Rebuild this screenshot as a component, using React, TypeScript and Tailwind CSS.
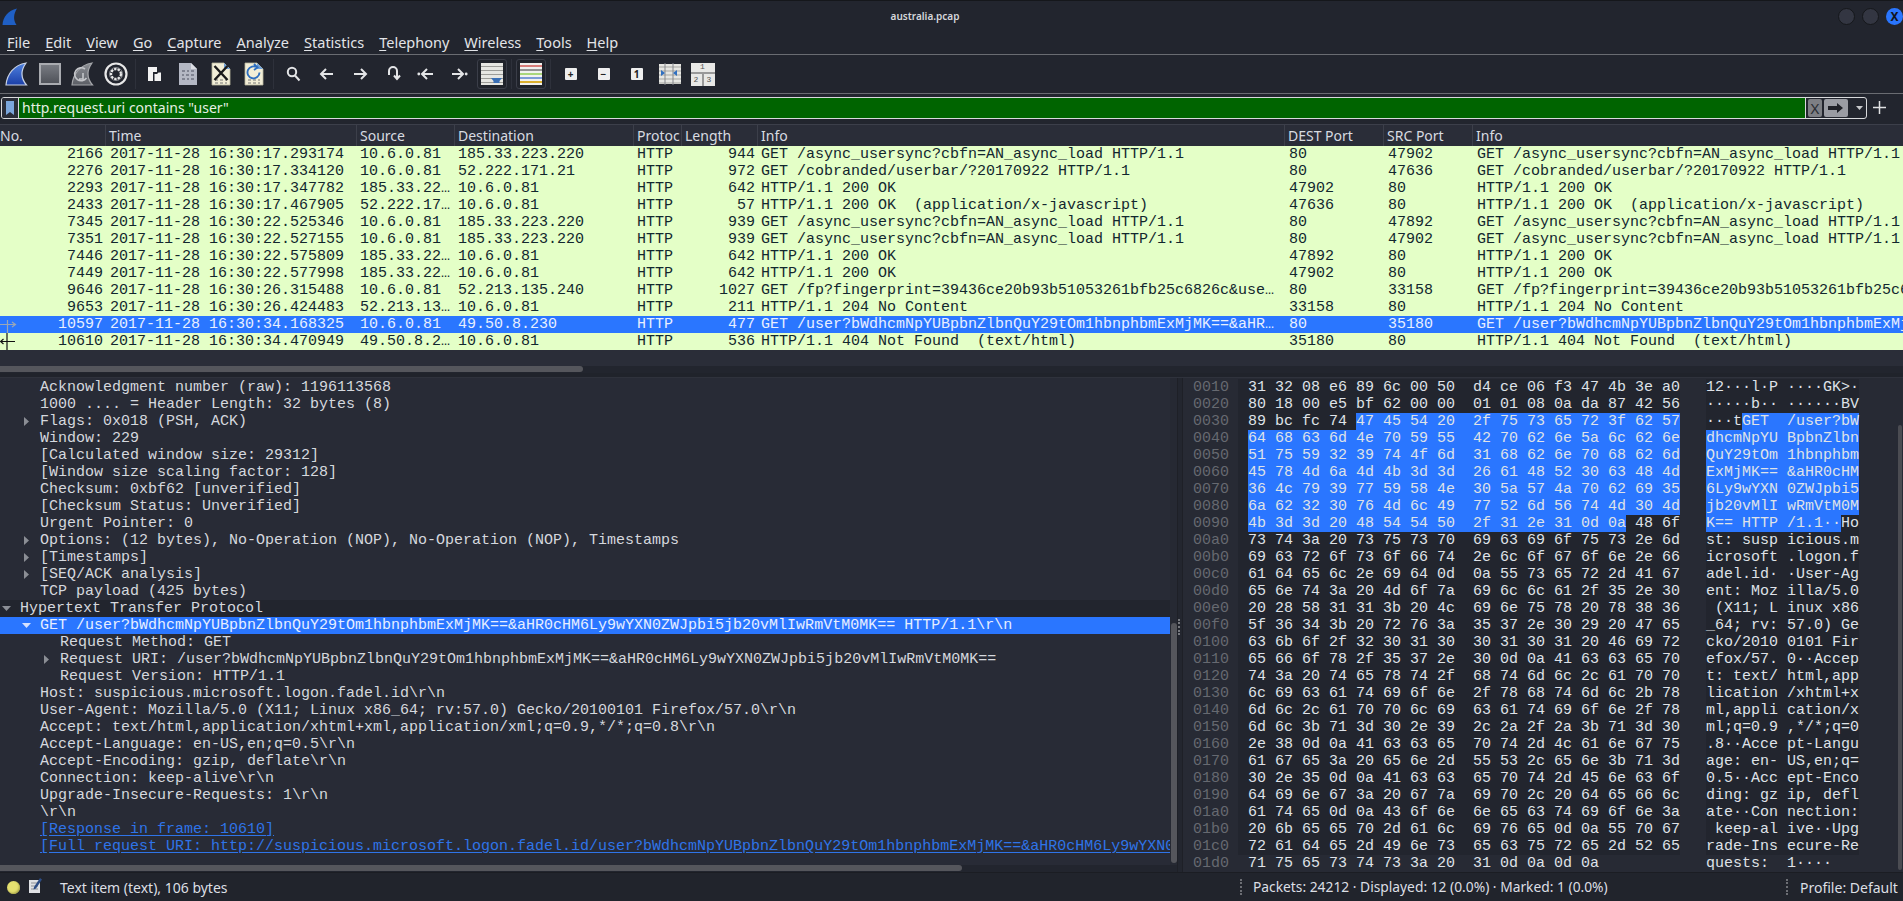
import type { ReactNode } from "react";

const MONO = "font-['Liberation_Mono',monospace]";
const SANS = "font-['Noto_Sans',sans-serif]";

const MENU = ["File", "Edit", "View", "Go", "Capture", "Analyze", "Statistics", "Telephony", "Wireless", "Tools", "Help"];

const COLUMNS = [
  { label: "No.", w: "w-[105px]", pl: "pl-0" },
  { label: "Time", w: "w-[251px]", pl: "pl-[3px]" },
  { label: "Source", w: "w-[98px]", pl: "pl-[3px]" },
  { label: "Destination", w: "w-[179px]", pl: "pl-[3px]" },
  { label: "Protoc", w: "w-[48px]", pl: "pl-[3px]" },
  { label: "Length", w: "w-[76px]", pl: "pl-[3px]" },
  { label: "Info", w: "w-[527px]", pl: "pl-[3px]" },
  { label: "DEST Port", w: "w-[99px]", pl: "pl-[3px]" },
  { label: "SRC Port", w: "w-[89px]", pl: "pl-[3px]" },
  { label: "Info", w: "flex-1", pl: "pl-[3px]" },
];

const ASYNC = "GET /async_usersync?cbfn=AN_async_load HTTP/1.1";
const USER = "GET /user?bWdhcmNpYUBpbnZlbnQuY29tOm1hbnphbmExMjMK==&aHR0cHM6Ly9wYXN0ZWJpbi5jb20vMlIwRmVtM0MK== HTTP/1.1";
const FP = "GET /fp?fingerprint=39436ce20b93b51053261bfb25c6826c&user_agent=Mozilla HTTP/1.1";

const PACKETS = [
  ["2166", "2017-11-28 16:30:17.293174", "10.6.0.81", "185.33.223.220", "944", ASYNC, "80", "47902", ASYNC],
  ["2276", "2017-11-28 16:30:17.334120", "10.6.0.81", "52.222.171.21", "972", "GET /cobranded/userbar/?20170922 HTTP/1.1", "80", "47636", "GET /cobranded/userbar/?20170922 HTTP/1.1"],
  ["2293", "2017-11-28 16:30:17.347782", "185.33.22…", "10.6.0.81", "642", "HTTP/1.1 200 OK", "47902", "80", "HTTP/1.1 200 OK"],
  ["2433", "2017-11-28 16:30:17.467905", "52.222.17…", "10.6.0.81", "57", "HTTP/1.1 200 OK  (application/x-javascript)", "47636", "80", "HTTP/1.1 200 OK  (application/x-javascript)"],
  ["7345", "2017-11-28 16:30:22.525346", "10.6.0.81", "185.33.223.220", "939", ASYNC, "80", "47892", ASYNC],
  ["7351", "2017-11-28 16:30:22.527155", "10.6.0.81", "185.33.223.220", "939", ASYNC, "80", "47902", ASYNC],
  ["7446", "2017-11-28 16:30:22.575809", "185.33.22…", "10.6.0.81", "642", "HTTP/1.1 200 OK", "47892", "80", "HTTP/1.1 200 OK"],
  ["7449", "2017-11-28 16:30:22.577998", "185.33.22…", "10.6.0.81", "642", "HTTP/1.1 200 OK", "47902", "80", "HTTP/1.1 200 OK"],
  ["9646", "2017-11-28 16:30:26.315488", "10.6.0.81", "52.213.135.240", "1027", "GET /fp?fingerprint=39436ce20b93b51053261bfb25c6826c&use…", "80", "33158", FP],
  ["9653", "2017-11-28 16:30:26.424483", "52.213.13…", "10.6.0.81", "211", "HTTP/1.1 204 No Content", "33158", "80", "HTTP/1.1 204 No Content"],
  ["10597", "2017-11-28 16:30:34.168325", "10.6.0.81", "49.50.8.230", "477", "GET /user?bWdhcmNpYUBpbnZlbnQuY29tOm1hbnphbmExMjMK==&aHR…", "80", "35180", USER],
  ["10610", "2017-11-28 16:30:34.470949", "49.50.8.2…", "10.6.0.81", "536", "HTTP/1.1 404 Not Found  (text/html)", "35180", "80", "HTTP/1.1 404 Not Found  (text/html)"],
];

type Detail = { text: string; pl: string; arrow?: "right" | "down"; kind?: "head" | "selected" | "link" };

const DETAILS: Detail[] = [
  { text: "Acknowledgment number (raw): 1196113568", pl: "pl-[20px]" },
  { text: "1000 .... = Header Length: 32 bytes (8)", pl: "pl-[20px]" },
  { text: "Flags: 0x018 (PSH, ACK)", pl: "pl-[20px]", arrow: "right" },
  { text: "Window: 229", pl: "pl-[20px]" },
  { text: "[Calculated window size: 29312]", pl: "pl-[20px]" },
  { text: "[Window size scaling factor: 128]", pl: "pl-[20px]" },
  { text: "Checksum: 0xbf62 [unverified]", pl: "pl-[20px]" },
  { text: "[Checksum Status: Unverified]", pl: "pl-[20px]" },
  { text: "Urgent Pointer: 0", pl: "pl-[20px]" },
  { text: "Options: (12 bytes), No-Operation (NOP), No-Operation (NOP), Timestamps", pl: "pl-[20px]", arrow: "right" },
  { text: "[Timestamps]", pl: "pl-[20px]", arrow: "right" },
  { text: "[SEQ/ACK analysis]", pl: "pl-[20px]", arrow: "right" },
  { text: "TCP payload (425 bytes)", pl: "pl-[20px]" },
  { text: "Hypertext Transfer Protocol", pl: "pl-0", arrow: "down", kind: "head" },
  { text: "GET /user?bWdhcmNpYUBpbnZlbnQuY29tOm1hbnphbmExMjMK==&aHR0cHM6Ly9wYXN0ZWJpbi5jb20vMlIwRmVtM0MK== HTTP/1.1\\r\\n", pl: "pl-[20px]", arrow: "down", kind: "selected" },
  { text: "Request Method: GET", pl: "pl-[40px]" },
  { text: "Request URI: /user?bWdhcmNpYUBpbnZlbnQuY29tOm1hbnphbmExMjMK==&aHR0cHM6Ly9wYXN0ZWJpbi5jb20vMlIwRmVtM0MK==", pl: "pl-[40px]", arrow: "right" },
  { text: "Request Version: HTTP/1.1", pl: "pl-[40px]" },
  { text: "Host: suspicious.microsoft.logon.fadel.id\\r\\n", pl: "pl-[20px]" },
  { text: "User-Agent: Mozilla/5.0 (X11; Linux x86_64; rv:57.0) Gecko/20100101 Firefox/57.0\\r\\n", pl: "pl-[20px]" },
  { text: "Accept: text/html,application/xhtml+xml,application/xml;q=0.9,*/*;q=0.8\\r\\n", pl: "pl-[20px]" },
  { text: "Accept-Language: en-US,en;q=0.5\\r\\n", pl: "pl-[20px]" },
  { text: "Accept-Encoding: gzip, deflate\\r\\n", pl: "pl-[20px]" },
  { text: "Connection: keep-alive\\r\\n", pl: "pl-[20px]" },
  { text: "Upgrade-Insecure-Requests: 1\\r\\n", pl: "pl-[20px]" },
  { text: "\\r\\n", pl: "pl-[20px]" },
  { text: "[Response in frame: 10610]", pl: "pl-[20px]", kind: "link" },
  { text: "[Full request URI: http://suspicious.microsoft.logon.fadel.id/user?bWdhcmNpYUBpbnZlbnQuY29tOm1hbnphbmExMjMK==&aHR0cHM6Ly9wYXN0ZWJpbi5jb20vMlIwRmVtM0MK==]", pl: "pl-[20px]", kind: "link" },
];

const HEX = [
  "31 32 08 e6 89 6c 00 50 d4 ce 06 f3 47 4b 3e a0",
  "80 18 00 e5 bf 62 00 00 01 01 08 0a da 87 42 56",
  "89 bc fc 74 47 45 54 20 2f 75 73 65 72 3f 62 57",
  "64 68 63 6d 4e 70 59 55 42 70 62 6e 5a 6c 62 6e",
  "51 75 59 32 39 74 4f 6d 31 68 62 6e 70 68 62 6d",
  "45 78 4d 6a 4d 4b 3d 3d 26 61 48 52 30 63 48 4d",
  "36 4c 79 39 77 59 58 4e 30 5a 57 4a 70 62 69 35",
  "6a 62 32 30 76 4d 6c 49 77 52 6d 56 74 4d 30 4d",
  "4b 3d 3d 20 48 54 54 50 2f 31 2e 31 0d 0a 48 6f",
  "73 74 3a 20 73 75 73 70 69 63 69 6f 75 73 2e 6d",
  "69 63 72 6f 73 6f 66 74 2e 6c 6f 67 6f 6e 2e 66",
  "61 64 65 6c 2e 69 64 0d 0a 55 73 65 72 2d 41 67",
  "65 6e 74 3a 20 4d 6f 7a 69 6c 6c 61 2f 35 2e 30",
  "20 28 58 31 31 3b 20 4c 69 6e 75 78 20 78 38 36",
  "5f 36 34 3b 20 72 76 3a 35 37 2e 30 29 20 47 65",
  "63 6b 6f 2f 32 30 31 30 30 31 30 31 20 46 69 72",
  "65 66 6f 78 2f 35 37 2e 30 0d 0a 41 63 63 65 70",
  "74 3a 20 74 65 78 74 2f 68 74 6d 6c 2c 61 70 70",
  "6c 69 63 61 74 69 6f 6e 2f 78 68 74 6d 6c 2b 78",
  "6d 6c 2c 61 70 70 6c 69 63 61 74 69 6f 6e 2f 78",
  "6d 6c 3b 71 3d 30 2e 39 2c 2a 2f 2a 3b 71 3d 30",
  "2e 38 0d 0a 41 63 63 65 70 74 2d 4c 61 6e 67 75",
  "61 67 65 3a 20 65 6e 2d 55 53 2c 65 6e 3b 71 3d",
  "30 2e 35 0d 0a 41 63 63 65 70 74 2d 45 6e 63 6f",
  "64 69 6e 67 3a 20 67 7a 69 70 2c 20 64 65 66 6c",
  "61 74 65 0d 0a 43 6f 6e 6e 65 63 74 69 6f 6e 3a",
  "20 6b 65 65 70 2d 61 6c 69 76 65 0d 0a 55 70 67",
  "72 61 64 65 2d 49 6e 73 65 63 75 72 65 2d 52 65",
  "71 75 65 73 74 73 3a 20 31 0d 0a 0d 0a",
];

function Fin({ gray }: { gray?: boolean }) {
  const id = gray ? "finGray" : "finBlue";
  return (
    <svg width="23" height="24" viewBox="0 0 23 24">
      <defs>
        <linearGradient id={id} x1="0" y1="0" x2="0" y2="1">
          <stop offset="0" stopColor={gray ? "#8a8d93" : "#4f82e0"} />
          <stop offset="1" stopColor={gray ? "#5c5f66" : "#1b3fa8"} />
        </linearGradient>
      </defs>
      <path d="M1 23C2 12 9 3 21 1C16 8 15.5 16 21.5 23Z" fill={`url(#${id})`} stroke={gray ? "#a4a6aa" : "#c9d2e4"} strokeWidth="1.2" />
      {gray && <path d="M14 7a6.5 6.5 0 1 0 1.5 9M12 11v6h-4" fill="none" stroke="#c4c6ca" strokeWidth="1.6" />}
    </svg>
  );
}

function Page({ children }: { children?: ReactNode }) {
  return (
    <svg width="20" height="24" viewBox="0 0 20 24">
      <path d="M1 1h12l6 6v16H1Z" fill="#f2eed7" stroke="#b9b6a0" strokeWidth="0.8" />
      <path d="M13 1l6 6h-6Z" fill="#6d9fd8" />
      <path d="M4 18h3M9 18h3M14 18h2M4 21h3M9 21h3M14 21h2" stroke="#777" strokeWidth="1.2" />
      {children}
    </svg>
  );
}

function ToolIcon({ children, boxed }: { children: ReactNode; boxed?: boolean }) {
  return (
    <div className="w-[33px] h-[38px] shrink-0 flex items-center justify-center">
      {boxed ? (
        <div className="w-[30px] h-[30px] rounded-[3px] border border-[#3b3e49] bg-[#20232b] flex items-center justify-center">{children}</div>
      ) : (
        children
      )}
    </div>
  );
}

function Sep({ w }: { w: string }) {
  return (
    <div className={`${w} h-[30px] shrink-0 flex justify-center`}>
      <div className="w-px h-full bg-[#2e313b]" />
    </div>
  );
}

function Stroke({ d, extra }: { d: string; extra?: ReactNode }) {
  return (
    <svg width="18" height="16" viewBox="0 0 18 16" fill="none" stroke="#e4e5e7" strokeWidth="2">
      <path d={d} />
      {extra}
    </svg>
  );
}

function ZoomBox({ label }: { label: ReactNode }) {
  return (
    <div className="w-[12px] h-[12px] rounded-[1px] bg-[#eeeeee] flex items-center justify-center text-[#222] text-[10px] font-bold leading-none">
      {label}
    </div>
  );
}

function Toolbar() {
  return (
    <div className="h-[38px] flex items-center shrink-0 border-b border-[#6a6c72] box-content">
      <ToolIcon><Fin /></ToolIcon>
      <ToolIcon>
        <div className="w-[22px] h-[22px] border-2 border-[#a9abb0] bg-gradient-to-b from-[#787b82] to-[#50535a]" />
      </ToolIcon>
      <ToolIcon><Fin gray /></ToolIcon>
      <ToolIcon>
        <svg width="24" height="24" viewBox="0 0 24 24" fill="none">
          <circle cx="12" cy="12" r="10.5" stroke="#e8e8e8" strokeWidth="2.2" />
          <circle cx="12" cy="12" r="5" stroke="#e8e8e8" strokeWidth="2.4" strokeDasharray="2.5 1" />
          <circle cx="12" cy="12" r="6.6" stroke="#8d8f94" strokeWidth="0.8" />
        </svg>
      </ToolIcon>
      <Sep w="w-[6px]" />
      <ToolIcon>
        <svg width="15" height="16" viewBox="0 0 15 16">
          <path d="M1 1h9v5H6v9H1Z" fill="#f2f2f2" />
          <path d="M7.5 8H10l1.5-1.5H14V15H7.5Z" fill="#f2f2f2" />
        </svg>
      </ToolIcon>
      <ToolIcon>
        <svg width="20" height="24" viewBox="0 0 20 24">
          <path d="M1 1h12l6 6v16H1Z" fill="#b4b8c4" />
          <path d="M13 1l6 6h-6Z" fill="#dcdee4" />
          <path d="M4 9h3M9 9h2M13 9h3M4 13h2M8 13h3M13 13h3M4 17h3M9 17h2M13 17h3" stroke="#6e7280" strokeWidth="1.3" />
        </svg>
      </ToolIcon>
      <ToolIcon>
        <Page><path d="M3.5 4L16.5 18M16.5 4L3.5 18" stroke="#1a1a1a" strokeWidth="2.4" /></Page>
      </ToolIcon>
      <ToolIcon>
        <Page><path d="M13 5.5a6 6 0 1 0 2.5 5M10 2l3.5 3.5L10 8" fill="none" stroke="#2e6fc0" strokeWidth="1.9" /></Page>
      </ToolIcon>
      <Sep w="w-[7px]" />
      <ToolIcon>
        <svg width="15" height="16" viewBox="0 0 15 16" fill="none" stroke="#e4e5e7" strokeWidth="2">
          <circle cx="6" cy="6" r="4.2" />
          <path d="M9 9.5l4.5 5" />
        </svg>
      </ToolIcon>
      <ToolIcon><Stroke d="M15 8H3M8 3L3 8l5 5" /></ToolIcon>
      <ToolIcon><Stroke d="M3 8h12M10 3l5 5-5 5" /></ToolIcon>
      <ToolIcon><Stroke d="M5 9V5a4 4 0 0 1 8 0v7M10 9.5l3 3.5 3-3.5" /></ToolIcon>
      <ToolIcon>
        <Stroke d="M16 8H6M10 3L5 8l5 5" extra={<circle cx="1.8" cy="8" r="1.4" fill="#e4e5e7" stroke="none" />} />
      </ToolIcon>
      <ToolIcon>
        <Stroke d="M2 8h10M8 3l5 5-5 5" extra={<circle cx="16.2" cy="8" r="1.4" fill="#e4e5e7" stroke="none" />} />
      </ToolIcon>
      <ToolIcon boxed>
        <svg width="22" height="22" viewBox="0 0 22 22">
          <rect width="22" height="22" fill="#e6e6e2" />
          <path d="M0 3.5h22M0 7.5h22M0 11.5h22M0 15.5h22M0 19.5h22" stroke="#9c9c98" strokeWidth="1" />
          <path d="M10 15h11l-2.5 3v2h-6v-2Z" fill="#3a6fb5" />
        </svg>
      </ToolIcon>
      <Sep w="w-[6px]" />
      <ToolIcon boxed>
        <svg width="22" height="22" viewBox="0 0 22 22">
          <rect width="22" height="22" fill="#f1f1ef" />
          <path d="M0 3h22" stroke="#c8322c" strokeWidth="1.2" />
          <path d="M0 7h22" stroke="#555" strokeWidth="1.2" />
          <path d="M0 11h22" stroke="#7ac52e" strokeWidth="1.2" />
          <path d="M0 15h22" stroke="#2e62c4" strokeWidth="1.2" />
          <path d="M0 19h22" stroke="#d6a100" strokeWidth="1.6" />
        </svg>
      </ToolIcon>
      <Sep w="w-[7px]" />
      <ToolIcon><ZoomBox label="+" /></ToolIcon>
      <ToolIcon><ZoomBox label="−" /></ToolIcon>
      <ToolIcon><ZoomBox label="1" /></ToolIcon>
      <ToolIcon>
        <svg width="22" height="22" viewBox="0 0 22 22">
          <rect y="1" width="22" height="20" fill="#e6e6e2" />
          <path d="M0 4h22M0 8h22M0 12h22M0 16h22M0 20h22" stroke="#a5a5a1" strokeWidth="1" />
          <path d="M6 0v22M14 0v22" stroke="#85878c" strokeWidth="1" />
          <path d="M2 7l4 3-4 3ZM18 7l-4 3 4 3Z" fill="#2f6fc0" />
        </svg>
      </ToolIcon>
      <ToolIcon>
        <div className={`w-[24px] h-[23px] bg-[#e8e8e6] flex flex-col text-[#555] text-[8px] leading-none ${MONO}`}>
          <div className="h-[11px] flex items-center justify-center border-b-2 border-[#999]">1</div>
          <div className="flex-1 flex">
            <div className="flex-1 flex items-center justify-center border-r-2 border-[#999]">2</div>
            <div className="flex-1 flex items-center justify-center">3</div>
          </div>
        </div>
      </ToolIcon>
    </div>
  );
}

function FilterBar() {
  return (
    <div className="h-[30px] shrink-0 pt-[3px] flex items-start">
      <div className="ml-px w-[1866px] h-[22px] flex rounded-[3px] border border-[#d8d9dc] overflow-hidden">
        <div className="w-[17px] shrink-0 flex items-center justify-center border-r border-[#d8d9dc] bg-[#2a2d38]">
          <svg width="8" height="14" viewBox="0 0 8 14"><path d="M0 0h8v14L4 11 0 14Z" fill="#7ba6dc" /></svg>
        </div>
        <div className={`flex-1 bg-[#006400] text-[#e6f0e4] text-[14px] leading-[20px] pl-[3px] ${SANS}`}>http.request.uri contains "user"</div>
        <div className="w-[61px] shrink-0 border-l border-[#d8d9dc] flex items-center gap-[2px] pl-[2px]">
          <div className={`w-[14px] h-[18px] bg-[#7d7f84] rounded-[2px] text-[#2a2d33] text-[15px] leading-[18px] text-center ${SANS}`}>X</div>
          <div className="w-[24px] h-[18px] bg-[#9a9ca3] rounded-[2px] flex items-center justify-center">
            <svg width="16" height="10" viewBox="0 0 16 10"><path d="M0 3h9V0l6 5-6 5V7H0Z" fill="#1e2027" /></svg>
          </div>
          <svg className="ml-[6px]" width="7" height="4" viewBox="0 0 7 4"><path d="M0 0h7L3.5 4Z" fill="#c8c9cc" /></svg>
        </div>
      </div>
      <svg className="ml-[6px] mt-[4px]" width="13" height="13" viewBox="0 0 13 13"><path d="M6.5 0v13M0 6.5h13" stroke="#e0e1e3" strokeWidth="1.5" /></svg>
    </div>
  );
}

function PacketRow({ p, index }: { p: string[]; index: number }) {
  const selected = index === 10;
  const last = index === 11;
  const cell = "shrink-0 overflow-hidden whitespace-pre";
  return (
    <div className={`h-[17px] flex text-[15px] leading-[17px] ${MONO} ${selected ? "bg-[#2a76ff] text-[#e8efff]" : "bg-[#e4ffc7] text-[#12272e]"}`}>
      <div className={`${cell} relative w-[105px] text-right pr-[2px]`}>
        {selected && (
          <svg className="absolute left-0 top-0" width="17" height="17" viewBox="0 0 17 17">
            <path d="M0 8.5h15M12 6l3.5 2.5L12 11M7.5 4v13" fill="none" stroke="#9aa6b8" strokeWidth="1.2" />
          </svg>
        )}
        {last && (
          <svg className="absolute left-0 top-0" width="17" height="17" viewBox="0 0 17 17">
            <path d="M1 8.5h14M3.5 6L0.5 8.5 3.5 11M7 0v17" fill="none" stroke="#111" strokeWidth="1.2" />
          </svg>
        )}
        {p[0]}
      </div>
      <div className={`${cell} w-[251px] pl-[5px]`}>{p[1]}</div>
      <div className={`${cell} w-[98px] pl-[4px]`}>{p[2]}</div>
      <div className={`${cell} w-[179px] pl-[4px]`}>{p[3]}</div>
      <div className={`${cell} w-[48px] pl-[4px]`}>HTTP</div>
      <div className={`${cell} w-[76px] text-right pr-[2px]`}>{p[4]}</div>
      <div className={`${cell} w-[527px] pl-[4px]`}>{p[5]}</div>
      <div className={`${cell} w-[99px] pl-[5px]`}>{p[6]}</div>
      <div className={`${cell} w-[89px] pl-[5px]`}>{p[7]}</div>
      <div className={`${cell} flex-1 pl-[5px]`}>{p[8]}</div>
    </div>
  );
}

function PacketList() {
  return (
    <div className="shrink-0">
      <div className={`h-[22px] flex border-t border-[#3c3f4a] bg-[#2a2d38] text-[#d8dbe1] text-[14px] leading-[21px] ${SANS}`}>
        {COLUMNS.map((c, i) => (
          <div key={i} className={`${c.w} ${c.pl} ${i > 0 ? "border-l border-[#3c3f4a]" : ""} overflow-hidden whitespace-pre shrink-0`}>
            {c.label}
          </div>
        ))}
      </div>
      {PACKETS.map((p, i) => (
        <PacketRow key={p[0]} p={p} index={i} />
      ))}
      <div className="h-[16px] bg-[#2a2d38]" />
      <div className="h-[7px] bg-[#22252e]">
        <div className="w-[583px] h-[6px] rounded-r-[3px] bg-[#55565c]" />
      </div>
      <div className="h-[5px] bg-[#20232b] border-b border-[#2f323c]" />
    </div>
  );
}

function DetailRow({ d }: { d: Detail }) {
  const tone =
    d.kind === "selected"
      ? "bg-[#2a76ff] text-[#e6eeff]"
      : d.kind === "head"
        ? "bg-[#22252e] text-[#d5d8de]"
        : d.kind === "link"
          ? "text-[#2f74e8]"
          : "text-[#d5d8de]";
  return (
    <div className={`h-[17px] flex ${d.pl} ${tone}`}>
      <div className="w-[20px] shrink-0 flex items-center justify-center pr-[7px]">
        {d.arrow === "right" && (
          <svg width="5" height="9" viewBox="0 0 5 9"><path d="M0 0l5 4.5L0 9Z" fill="#8b8e95" /></svg>
        )}
        {d.arrow === "down" && (
          <svg width="9" height="5" viewBox="0 0 9 5"><path d="M0 0h9L4.5 5Z" fill={d.kind === "selected" ? "#d5e2ff" : "#8b8e95"} /></svg>
        )}
      </div>
      <div className={`whitespace-pre ${d.kind === "link" ? "underline underline-offset-[2px]" : ""}`}>{d.text}</div>
    </div>
  );
}

function DetailsPane() {
  return (
    <div className="w-[1178px] shrink-0 flex flex-col border-r border-[#1e2027]">
      <div className="flex-1 flex min-h-0">
        <div className={`w-[1170px] shrink-0 pt-px overflow-hidden text-[15px] leading-[17px] ${MONO}`}>
          {DETAILS.map((d, i) => (
            <DetailRow key={i} d={d} />
          ))}
        </div>
        <div className="flex-1 flex flex-col pt-[245px] pl-px bg-[#262933]">
          <div className="w-[6px] h-[240px] rounded-[3px] bg-[#55565c]" />
        </div>
      </div>
      <div className="h-[7px] bg-[#22252e] shrink-0">
        <div className="w-[962px] h-[6px] rounded-r-[3px] bg-[#55565c]" />
      </div>
    </div>
  );
}

// selected bytes per dump row: the GET line runs from byte 4 of row 2 to byte 13 of row 8
function highlightRange(row: number): [number, number] {
  if (row === 2) return [4, 16];
  if (row === 8) return [0, 14];
  if (row > 2 && row < 8) return [0, 16];
  return [0, 0];
}

function Marked({ text, from, to, dark }: { text: string; from: number; to: number; dark: boolean }) {
  return (
    <span className={`inline-block whitespace-pre ${dark ? "bg-[#22252e]" : ""}`}>
      {text.slice(0, from)}
      <span className="bg-[#2a76ff]">{text.slice(from, to)}</span>
      {text.slice(to)}
    </span>
  );
}

function HexRow({ hex, row }: { hex: string; row: number }) {
  const bytes = hex.split(" ");
  const text = bytes.slice(0, 8).join(" ") + "  " + bytes.slice(8).join(" ");
  const ascii = bytes
    .map((b) => {
      const n = parseInt(b, 16);
      return n >= 32 && n < 127 ? String.fromCharCode(n) : "·";
    })
    .join("");
  const asciiText = ascii.slice(0, 8) + " " + ascii.slice(8);

  const [a, b] = highlightRange(row);
  const idx = (n: number) => n * 3 + (n >= 8 ? 1 : 0);
  const hexFrom = a === b ? 0 : idx(a);
  const hexTo = a === b ? 0 : idx(b) - 1;
  const ascFrom = a === b ? 0 : a + (a >= 8 ? 1 : 0);
  const ascTo = a === b ? 0 : b + (b >= 8 ? 1 : 0);
  const dark = bytes.length === 16;

  return (
    <div className="h-[17px] flex whitespace-pre text-[#dfe2e8]">
      <div className="w-[55px] shrink-0 pl-[10px] text-[#666970]">{(0x10 * (row + 1)).toString(16).padStart(4, "0")}</div>
      <div className={`w-[442px] shrink-0 pl-[10px] ${dark ? "bg-[#22252e]" : ""}`}>
        <Marked text={text} from={hexFrom} to={hexTo} dark={false} />
      </div>
      <div className="w-[26px] shrink-0" />
      <Marked text={asciiText} from={ascFrom} to={ascTo} dark={dark} />
    </div>
  );
}

function HexPane() {
  return (
    <div className="flex-1 flex min-w-0 bg-[#272a34]">
      <div className="w-[4px] shrink-0 flex flex-col pt-[241px] bg-[#23262f]">
        <div className="w-[2px] h-[16px] border-l-2 border-dotted border-[#77797f]" />
      </div>
      <div className={`flex-1 pt-px overflow-hidden text-[15px] leading-[17px] border-l border-[#1e2027] ${MONO}`}>
        {HEX.map((h, i) => (
          <HexRow key={i} hex={h} row={i} />
        ))}
      </div>
      <div className="w-[5px] shrink-0 pt-[47px]">
        <div className="w-[4px] h-[445px] rounded-[2px] bg-[#4b4c52]" />
      </div>
    </div>
  );
}

function StatusBar() {
  return (
    <div className={`h-[29px] shrink-0 flex items-center bg-[#21242c] text-[#dcdfe4] text-[14px] border-t border-[#1b1d23] ${SANS}`}>
      <div className="w-[60px] shrink-0 flex items-center pl-[7px]">
        <div className="w-[13px] h-[13px] rounded-full bg-[#e4e070] shadow-[inset_-1px_-1px_2px_#a9a64a]" />
        <svg className="ml-[9px] -mt-[3px]" width="13" height="15" viewBox="0 0 13 15">
          <path d="M0 2h11v13H0Z" fill="#dfe1e4" />
          <path d="M2 5h7M2 8h7M2 11h7" stroke="#8c8f95" strokeWidth="1" />
          <path d="M5 9l6-9 2 1.5-6 9-2.5 1Z" fill="#2c4c84" />
        </svg>
      </div>
      <div className="w-[1180px] shrink-0 whitespace-pre">Text item (text), 106 bytes</div>
      <div className="w-[2px] h-[16px] shrink-0 border-l-2 border-dotted border-[#6c6e74]" />
      <div className="w-[544px] shrink-0 pl-[11px] whitespace-pre text-[13.8px]">Packets: 24212 · Displayed: 12 (0.0%) · Marked: 1 (0.0%)</div>
      <div className="w-[2px] h-[16px] shrink-0 border-l-2 border-dotted border-[#6c6e74]" />
      <div className="pl-[12px] whitespace-pre">Profile: Default</div>
    </div>
  );
}

export default function App() {
  return (
    <div className={`w-[1903px] h-[901px] overflow-hidden flex flex-col bg-[#22252e] ${SANS}`}>
      {/* Title bar */}
      <div className="h-[32px] shrink-0 flex items-center border-t border-[#15171b] relative">
        <svg className="ml-[2px]" width="16" height="18" viewBox="0 0 16 18">
          <path d="M0.5 17C1 9 6 2.5 15 0.5C11.5 6 11 12 14.5 17Z" fill="#1f5fc4" />
        </svg>
        <div className="flex-1 text-center text-[10px] font-semibold text-[#d5d7db] pr-[6px]">australia.pcap</div>
        <div className="flex items-center gap-[7px]">
          <div className="w-[17px] h-[17px] rounded-full bg-[#333642] border border-[#15171b]" />
          <div className="w-[17px] h-[17px] rounded-full bg-[#333642] border border-[#15171b]" />
          <div className="w-[17px] h-[17px] rounded-full bg-[#2a76ff] text-[#12151c] text-[12px] font-bold leading-[17px] text-center">X</div>
        </div>
      </div>

      {/* Menu bar */}
      <div className="h-[22px] shrink-0 flex items-center pl-[7px] gap-[15px] text-[14.5px] text-[#e2e4e8] border-b border-[#6a6c72] box-content">
        {MENU.map((m) => (
          <span key={m} className="whitespace-pre">
            <span className="underline underline-offset-[2px]">{m[0]}</span>
            {m.slice(1)}
          </span>
        ))}
      </div>

      <Toolbar />
      <FilterBar />
      <PacketList />

      <div className="flex-1 flex min-h-0 bg-[#282b36]">
        <DetailsPane />
        <HexPane />
      </div>

      <StatusBar />
    </div>
  );
}
